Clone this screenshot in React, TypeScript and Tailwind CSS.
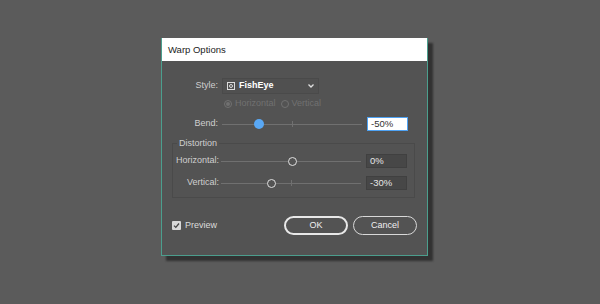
import React from "react";

const font = { fontFamily: '"Liberation Sans", Arial, sans-serif' };

function Slider({ pos, active }: { pos: number; active?: boolean }) {
  return (
    <div className="relative w-[140px] h-[12px] flex items-center">
      <div className="w-full h-[1px] bg-[#707070]" />
      <div className="absolute left-[70px] top-[3px] w-[1px] h-[6px] bg-[#707070]" />
      {active ? (
        <div
          className="absolute top-[1px] w-[10px] h-[10px] rounded-full bg-[#59a8f5]"
          style={{ left: pos - 5 }}
        />
      ) : (
        <div
          className="absolute top-[1.5px] w-[9px] h-[9px] rounded-full border-[1.5px] border-[#e0e0e0] bg-[#535353]"
          style={{ left: pos - 4.5 }}
        />
      )}
    </div>
  );
}

function Field({ value, active }: { value: string; active?: boolean }) {
  return active ? (
    <div className="w-[41px] h-[14px] bg-white border border-[#4ea2f3] text-[#333] text-[9.5px] leading-[12px] pl-[3px]">
      {value}
    </div>
  ) : (
    <div className="w-[41px] h-[14px] bg-[#474747] border border-[#404040] text-[#e6e6e6] text-[9.5px] leading-[12px] pl-[3px]">
      {value}
    </div>
  );
}

export default function App() {
  return (
    <div
      className="w-[600px] h-[304px] bg-[#5b5b5b] pl-[161px] pt-[38px]"
      style={font}
    >
      <div className="w-[267px] h-[218px] bg-[#535353] border-[1.5px] border-t-0 border-[#4b9e8d] shadow-[5px_5px_2px_rgba(0,0,0,0.45)] flex flex-col">
        <div className="h-[23px] bg-white flex items-center pl-[6px] pt-[2px] text-[9.5px] text-[#222]">
          Warp Options
        </div>
        <div className="flex flex-col text-[9px] text-[#cfcfcf]">
          {/* Style row */}
          <div className="flex items-center mt-[17px] h-[16px]">
            <div className="w-[57px] text-right pr-[1px]">Style:</div>
            <div className="ml-[3px] w-[97px] h-[16px] border border-[#4a4a4a] bg-[#505050] flex items-center pl-[4px]">
              <div className="w-[8px] h-[8px] border border-[#dcdcdc] flex items-center justify-center">
                <div className="w-[4px] h-[4px] border border-[#dcdcdc] rounded-full" />
              </div>
              <span className="ml-[4px] text-white font-bold text-[9px]">FishEye</span>
              <svg className="ml-auto mr-[4px]" width="6" height="4" viewBox="0 0 6 4">
                <path d="M0.5 0.5 L3 3 L5.5 0.5" stroke="#e0e0e0" strokeWidth="1.3" fill="none" />
              </svg>
            </div>
          </div>
          {/* Radio row */}
          <div className="flex items-center mt-[2px] h-[16px] pl-[62px] text-[#717171]">
            <div className="w-[8px] h-[8px] rounded-full border border-[#717171] flex items-center justify-center">
              <div className="w-[4px] h-[4px] rounded-full bg-[#717171]" />
            </div>
            <span className="ml-[3px]">Horizontal</span>
            <div className="ml-[5px] w-[8px] h-[8px] rounded-full border border-[#717171]" />
            <span className="ml-[3px]">Vertical</span>
          </div>
          {/* Bend row */}
          <div className="flex items-center mt-[4px] h-[16px]">
            <div className="w-[57px] text-right pr-[1px]">Bend:</div>
            <div className="ml-[3px]">
              <Slider pos={37} active />
            </div>
            <div className="ml-[5px]">
              <Field value="-50%" active />
            </div>
          </div>
          {/* Distortion group */}
          <fieldset className="ml-[10px] mt-[6px] w-[243px] h-[60px] border border-[#4a4a4a] px-0">
            <legend className="ml-[4px] px-[2px] text-[9px] text-[#cfcfcf] leading-[10px]">
              Distortion
            </legend>
            <div className="flex items-center mt-[5px] h-[16px]">
              <div className="w-[46px] text-right">Horizontal:</div>
              <div className="ml-[2px]">
                <Slider pos={71} />
              </div>
              <div className="ml-[5px]">
                <Field value="0%" />
              </div>
            </div>
            <div className="flex items-center mt-[6px] h-[16px]">
              <div className="w-[46px] text-right">Vertical:</div>
              <div className="ml-[2px]">
                <Slider pos={50} />
              </div>
              <div className="ml-[5px]">
                <Field value="-30%" />
              </div>
            </div>
          </fieldset>
          {/* Bottom row */}
          <div className="flex items-center mt-[18px] h-[19px] pl-[10px] pr-[10px]">
            <div className="w-[9px] h-[9px] bg-[#d8d8d8] rounded-[1px] flex items-center justify-center">
              <svg width="7" height="7" viewBox="0 0 7 7">
                <path d="M1 3.6 L2.8 5.4 L6 1.5" stroke="#444" strokeWidth="1.3" fill="none" />
              </svg>
            </div>
            <span className="ml-[4px] text-[#dcdcdc]">Preview</span>
            <div className="ml-auto flex gap-[5px]">
              <div className="w-[64px] h-[19px] rounded-full border-[2px] border-[#e8e8e8] flex items-center justify-center text-[#f0f0f0]">
                OK
              </div>
              <div className="w-[64px] h-[19px] rounded-full border border-[#d8d8d8] flex items-center justify-center text-[#f0f0f0]">
                Cancel
              </div>
            </div>
          </div>
        </div>
      </div>
    </div>
  );
}
